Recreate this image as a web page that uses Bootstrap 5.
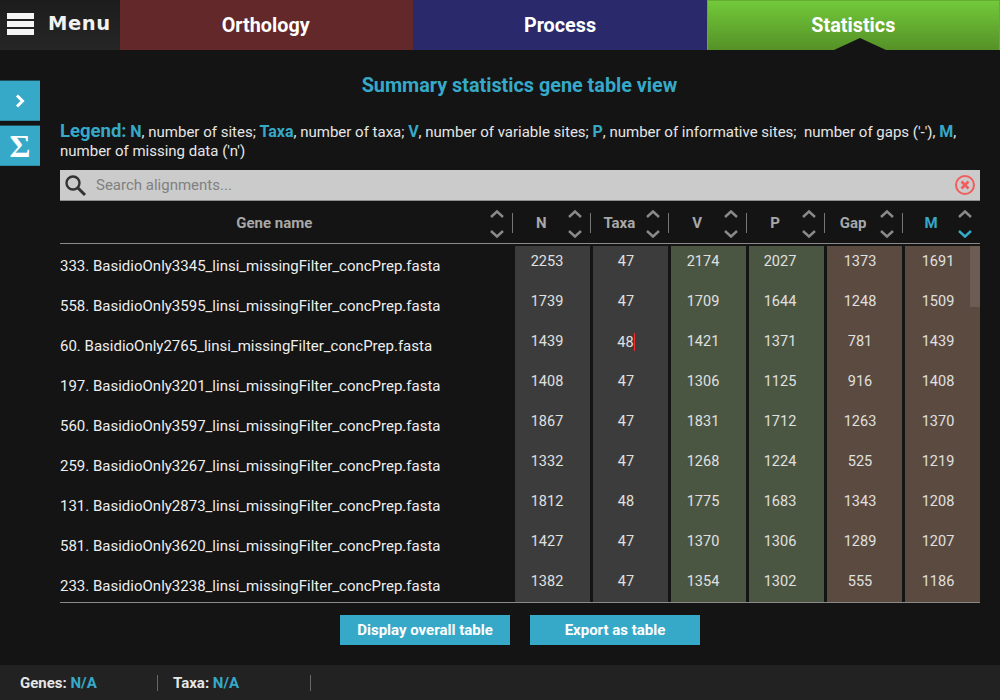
<!DOCTYPE html>
<html>
<head>
<meta name="viewport" content="width=device-width, initial-scale=1">
<link href="https://cdn.jsdelivr.net/npm/bootstrap@5.3.0/dist/css/bootstrap.min.css" rel="stylesheet">
<script src="https://cdn.jsdelivr.net/npm/bootstrap@5.3.0/dist/js/bootstrap.bundle.min.js"></script>
<style>
html, body {height: 100%;}
body {background: #141414; color: #e6e6e6; font-family: Roboto, "Liberation Sans", sans-serif; font-size: 15px; overflow: hidden;}
.accent {color: #36a9c9;}

/* top bar */
.topbar {height: 50px;}
.menu-box {width: 120px; background: linear-gradient(#1c1c1c, #262626); gap: 15px; padding-left: 7px;}
.menu-word {font-family: "DejaVu Sans", sans-serif; font-weight: 700; font-size: 19.5px; letter-spacing: .6px; color: #f2f2f2; position: relative; top: -1px; left: -1px;}
.burger {width: 27px; height: 22px; display: flex; flex-direction: column; justify-content: space-between; position: relative; top: -1px;}
.burger i {display: block; height: 6px; background: #f5f5f5;}
.tab-item {flex: 0 0 293.33px; color: #fff; font-weight: 700; font-size: 19.8px; position: relative;}
.tab-orth {background: #632829; padding-top: 2px; padding-right: 2px;}
.tab-proc {background: #29296b; padding-top: 2px;}
.tab-stat {background: linear-gradient(#72c93a, #559127); border: 1px solid #64ad33; border-bottom: 0;}
.tab-stat::after {content: ""; position: absolute; left: 126px; bottom: 0; border-left: 26px solid transparent; border-right: 26px solid transparent; border-bottom: 12px solid #141414;}

/* side buttons */
.side-col {width: 60px; padding-top: 31px; gap: 5px;}
.side-btn {width: 40px; height: 40px; background: #36a9c9; color: #fff; border-bottom: 1px solid #2c8ba6; box-shadow: 0 -1px 0 #1e4f5d;}
.sigma {font-family: "Liberation Serif", serif; font-weight: 700; font-size: 32px; line-height: 1;}

/* main */
.main-col {width: 920px;}
.page-title {font-size: 19.8px; font-weight: 700; line-height: 21px; margin: 25px 0 26px; padding-right: 1px;}
.legend-text {line-height: 19px; height: 38px; margin-bottom: 10px; font-size: 15px;}
.legend-text b {font-size: 16px;}
.legend-word {font-size: 18.5px; font-weight: 700;}
.search-bar {height: 31px; background: #cbcbcb; border-bottom: 1px solid #8f8f8f;}
.search-hint {color: #808080; margin-left: 9px;}

/* table */
.head-row {height: 43px; padding-top: 3px; border-bottom: 1px solid #8a8a8a; color: #a8a8a8; font-weight: 700;}
.head-name {width: 453px; padding-right: 24px;}
.head-cell {width: 78px; position: relative; padding-right: 20px;}
.head-cell::before {content: ""; position: absolute; left: 0; top: 9px; height: 20px; border-left: 1px solid #777;}
.sort-arrows {position: absolute; right: 8px; top: 5px; height: 30px; width: 14px;}
.gene-body {height: 358px; overflow: hidden; padding-top: 2px; position: relative;}
.gene-row {height: 40px;}
.gene-name {width: 455px; padding-top: 12px; color: #eee; line-height: 17px;}
.num-cell {width: 75px; margin-right: 3px; padding-top: 7px; padding-right: 9px; line-height: 17px; text-align: center; color: #e0e0e0; font-size: 14.5px;}
.num-cell:nth-child(2), .num-cell:nth-child(4) {padding-right: 11px;}
.num-cell:nth-child(5) {padding-right: 13px;}
.num-cell:last-child {margin-right: 0;}
.bg-n {background: #3c3c3c;}
.bg-v {background: #4a5642;}
.bg-g {background: #5a4a3f;}
.caret-mark {display: inline-block; width: 1px; height: 18px; background: #f03030; vertical-align: -4px;}
.scroll-thumb {position: absolute; right: 0; top: 2px; width: 10px; height: 61px; background: rgba(255,255,255,.11);}
.foot-line {border-top: 1px solid #8a8a8a; height: 1px;}
.action-btn {width: 170px; height: 30px; background: #36a9c9; color: #fff; font-weight: 700; font-size: 15px; border-radius: 0; border: 0; padding: 0;}
.action-row {gap: 20px; margin-top: 12px; padding-left: 280px;}

/* status bar */
.status-bar {height: 35px; background: #222; position: fixed; left: 0; right: 0; bottom: 0; font-weight: 700;}
.status-item {height: 16px; border-right: 1px solid #666; line-height: 16px;}
.status-genes {width: 158px; padding-left: 20px;}
.status-taxa {width: 153px; padding-left: 15px;}
</style>
</head>
<body>

<div class="topbar d-flex">
  <div class="menu-box d-flex align-items-center">
    <div class="burger"><i></i><i></i><i></i></div>
    <span class="menu-word">Menu</span>
  </div>
  <div class="tab-item tab-orth d-flex align-items-center justify-content-center">Orthology</div>
  <div class="tab-item tab-proc d-flex align-items-center justify-content-center">Process</div>
  <div class="tab-item tab-stat d-flex align-items-center justify-content-center">Statistics</div>
</div>

<div class="d-flex">
  <div class="side-col d-flex flex-column">
    <div class="side-btn d-flex align-items-center justify-content-center">
      <svg width="12" height="14" viewBox="0 0 12 14"><path d="M3 1.5 8.5 7 3 12.5" fill="none" stroke="#fff" stroke-width="3"/></svg>
    </div>
    <div class="side-btn d-flex align-items-center justify-content-center"><span class="sigma">Σ</span></div>
  </div>

  <div class="main-col">
    <div class="page-title accent text-center">Summary statistics gene table view</div>
    <div class="legend-text">
      <span class="legend-word accent">Legend:</span>
      <b class="accent">N</b>, number of sites; <b class="accent">Taxa</b>, number of taxa; <b class="accent">V</b>, number of variable sites; <b class="accent">P</b>, number of informative sites;&nbsp; number of gaps ('-'), <b class="accent">M</b>,<br>number of missing data ('n')
    </div>

    <div class="search-bar d-flex align-items-center">
      <svg class="ms-1" width="23" height="23" viewBox="0 0 23 23"><circle cx="9" cy="9" r="6.5" fill="none" stroke="#333" stroke-width="2.4"/><path d="M14 14l7 7" stroke="#333" stroke-width="3"/></svg>
      <span class="search-hint flex-grow-1">Search alignments...</span>
      <svg class="me-1" width="22" height="22" viewBox="0 0 22 22"><circle cx="11" cy="11" r="9" fill="none" stroke="#f25c5c" stroke-width="2"/><path d="M7.5 7.5l7 7M14.5 7.5l-7 7" stroke="#f25c5c" stroke-width="2.6"/></svg>
    </div>

    <div class="head-row d-flex" id="headRow"></div>
    <div class="gene-body" id="geneBody"></div>
    <div class="foot-line"></div>

    <div class="action-row d-flex">
      <button class="btn action-btn">Display overall table</button>
      <button class="btn action-btn">Export as table</button>
    </div>
  </div>
</div>

<div class="status-bar d-flex align-items-center">
  <div class="status-item status-genes">Genes: <span class="accent">N/A</span></div>
  <div class="status-item status-taxa">Taxa: <span class="accent">N/A</span></div>
</div>

<script>
var rows = [
  ["333. BasidioOnly3345",2253,47,2174,2027,1373,1691],
  ["558. BasidioOnly3595",1739,47,1709,1644,1248,1509],
  ["60. BasidioOnly2765",1439,48,1421,1371,781,1439],
  ["197. BasidioOnly3201",1408,47,1306,1125,916,1408],
  ["560. BasidioOnly3597",1867,47,1831,1712,1263,1370],
  ["259. BasidioOnly3267",1332,47,1268,1224,525,1219],
  ["131. BasidioOnly2873",1812,48,1775,1683,1343,1208],
  ["581. BasidioOnly3620",1427,47,1370,1306,1289,1207],
  ["233. BasidioOnly3238",1382,47,1354,1302,555,1186]
];
var colBg = ["bg-n","bg-n","bg-v","bg-v","bg-g","bg-g"];

function arrows(active) {
  var low = active ? "#36a9c9" : "#8a8a8a";
  return '<svg class="sort-arrows" viewBox="0 0 14 30"><path d="M1 8 7 2.500l6 5.500" fill="none" stroke="#8a8a8a" stroke-width="2.400"/>' +
         '<path d="M1 22 7 27.500l6-5.500" fill="none" stroke="' + low + '" stroke-width="2.400"/></svg>';
}

var head = '<div class="head-name d-flex align-items-center justify-content-center position-relative">Gene name' + arrows(false) + '</div>';
["N","Taxa","V","P","Gap","M"].forEach(function(h, i) {
  var cls = h == "M" ? " accent" : "";
  head += '<div class="head-cell d-flex align-items-center justify-content-center' + cls + '">' + h + arrows(h == "M") + '</div>';
});
document.getElementById("headRow").innerHTML = head;

var body = "";
rows.forEach(function(r, i) {
  body += '<div class="gene-row d-flex"><div class="gene-name">' + r[0] + '_linsi_missingFilter_concPrep.fasta</div>';
  for (var c = 0; c < 6; c++) {
    var val = r[c + 1];
    if (i == 2 && c == 1) val += '<span class="caret-mark"></span>';
    body += '<div class="num-cell ' + colBg[c] + '">' + val + '</div>';
  }
  body += '</div>';
});
document.getElementById("geneBody").innerHTML = body + '<div class="scroll-thumb"></div>';
</script>
</body>
</html>
